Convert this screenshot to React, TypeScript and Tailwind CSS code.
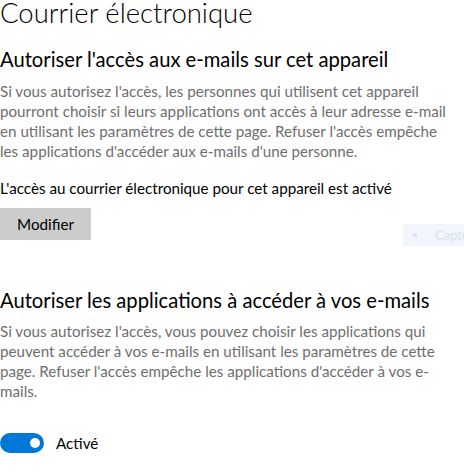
import React from "react";

function Toggle() {
  return (
    <div className="flex h-[20px] w-[44px] items-center justify-end rounded-full bg-[#0078d7] pr-[4px]">
      <div className="h-[10px] w-[10px] rounded-full bg-white" />
    </div>
  );
}

export default function App() {
  return (
    <div className="relative h-[476px] w-[464px] overflow-hidden bg-white font-['Lato',sans-serif] text-black">
      <div className="flex flex-col items-start">
        <h1 className="whitespace-nowrap text-[27.5px] font-light leading-[25px]">Courrier électronique</h1>

        <h2 className="mt-[20px] whitespace-nowrap text-[20.2px] font-normal leading-[28px]">
          Autoriser l'accès aux e-mails sur cet appareil
        </h2>
        <p className="mt-[8px] flex flex-col whitespace-nowrap text-[15.2px] leading-[20px] text-[#6e6e6e]">
          <span>Si vous autorisez l'accès, les personnes qui utilisent cet appareil</span>
          <span>pourront choisir si leurs applications ont accès à leur adresse e-mail</span>
          <span>en utilisant les paramètres de cette page. Refuser l'accès empêche</span>
          <span>les applications d'accéder aux e-mails d'une personne.</span>
        </p>

        <p className="mt-[17px] whitespace-nowrap text-[15.2px] leading-[20px]">
          L'accès au courrier électronique pour cet appareil est activé
        </p>
        <button className="mt-[10px] h-[32px] w-[91px] bg-[#cccccc] text-[15.2px] leading-[20px] text-black">
          Modifier
        </button>

        <h2 className="mt-[46px] whitespace-nowrap text-[20.2px] font-normal leading-[28px]">
          Autoriser les applications à accéder à vos e-mails
        </h2>
        <p className="mt-[7px] flex flex-col whitespace-nowrap text-[15.2px] leading-[20px] text-[#6e6e6e]">
          <span>Si vous autorisez l'accès, vous pouvez choisir les applications qui</span>
          <span>peuvent accéder à vos e-mails en utilisant les paramètres de cette</span>
          <span>page. Refuser l'accès empêche les applications d'accéder à vos e-</span>
          <span>mails.</span>
        </p>

        <div className="mt-[32px] flex items-center gap-[12px]">
          <Toggle />
          <span className="text-[15.2px] leading-[20px]">Activé</span>
        </div>
      </div>

      <div className="absolute left-[403px] top-[224px] flex h-[22px] w-[80px] items-center gap-[18px] bg-[#f1f6fd] pl-[10px]">
        <div className="h-[4px] w-[4px] bg-[#dbe6f3]" />
        <span className="whitespace-nowrap text-[13px] leading-[16px] text-[#d9e3ee]">Capture</span>
      </div>
    </div>
  );
}
